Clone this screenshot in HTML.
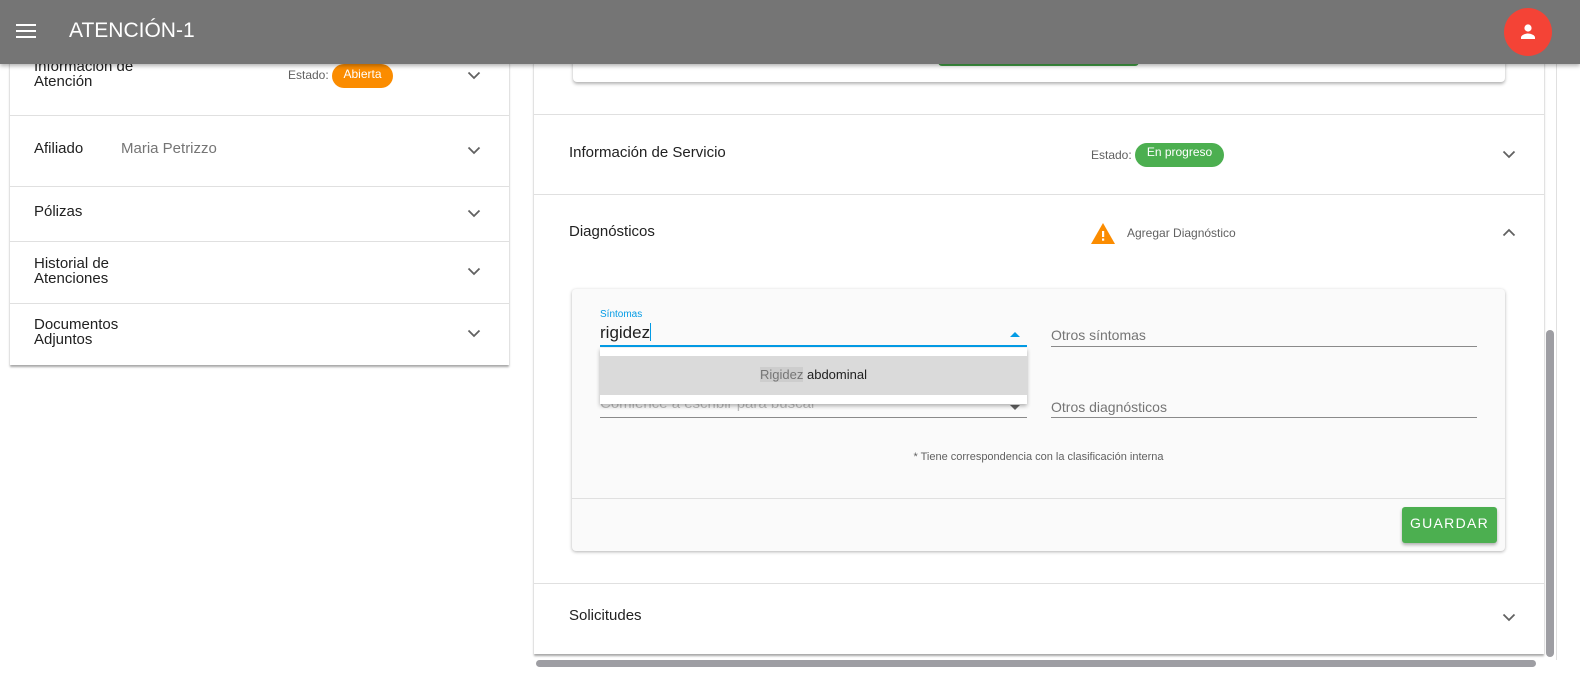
<!DOCTYPE html>
<html><head><meta charset="utf-8"><style>
*{box-sizing:border-box;margin:0;padding:0}
body{width:1580px;height:696px;overflow:hidden;background:#fff;font-family:"Liberation Sans",sans-serif;position:relative;color:#212121}
.a{position:absolute}
.hr{position:absolute;height:1px;background:#e0e0e0}
.t{position:absolute;font-size:15px;color:#212121;line-height:15px}
.chev{position:absolute;width:14px;height:9px}
</style></head><body>

<!-- left panel -->
<div class="a" style="left:10px;top:40px;width:499px;height:325px;background:#fff;box-shadow:0 2px 2px rgba(0,0,0,.35)"></div>
<div class="t" style="left:34px;top:59px">Información de<br>Atención</div>
<div class="a" style="left:288px;top:68px;font-size:12px;color:#616161">Estado:</div>
<div class="a" style="left:332px;top:64px;width:61px;height:24px;border-radius:12px;background:#fb8c00;color:#fff;font-size:12px;text-align:center;line-height:21px">Abierta</div>
<div class="hr" style="left:10px;top:115px;width:499px"></div>
<div class="t" style="left:34px;top:141px">Afiliado</div>
<div class="t" style="left:121px;top:141px;color:#757575">Maria Petrizzo</div>
<div class="hr" style="left:10px;top:186px;width:499px"></div>
<div class="t" style="left:34px;top:204px">Pólizas</div>
<div class="hr" style="left:10px;top:241px;width:499px"></div>
<div class="t" style="left:34px;top:256px">Historial de<br>Atenciones</div>
<div class="hr" style="left:10px;top:303px;width:499px"></div>
<div class="t" style="left:34px;top:317px">Documentos<br>Adjuntos</div>

<svg class="chev" style="left:467px;top:71px" viewBox="0 0 14 9"><path d="M1.5 1.5 7 7l5.5-5.5" fill="none" stroke="#616161" stroke-width="1.8"/></svg>
<svg class="chev" style="left:467px;top:146px" viewBox="0 0 14 9"><path d="M1.5 1.5 7 7l5.5-5.5" fill="none" stroke="#616161" stroke-width="1.8"/></svg>
<svg class="chev" style="left:467px;top:209px" viewBox="0 0 14 9"><path d="M1.5 1.5 7 7l5.5-5.5" fill="none" stroke="#616161" stroke-width="1.8"/></svg>
<svg class="chev" style="left:467px;top:267px" viewBox="0 0 14 9"><path d="M1.5 1.5 7 7l5.5-5.5" fill="none" stroke="#616161" stroke-width="1.8"/></svg>
<svg class="chev" style="left:467px;top:329px" viewBox="0 0 14 9"><path d="M1.5 1.5 7 7l5.5-5.5" fill="none" stroke="#616161" stroke-width="1.8"/></svg>

<!-- right panel -->
<div class="a" style="left:534px;top:40px;width:1010px;height:614px;background:#fff;box-shadow:0 2px 2px rgba(0,0,0,.35)"></div>
<div class="a" style="left:573px;top:40px;width:932px;height:42px;background:#fff;border-radius:0 0 4px 4px;box-shadow:0 2px 3px rgba(0,0,0,.3)"></div>
<div class="a" style="left:938px;top:60px;width:201px;height:6px;background:#43a047;border-radius:0 0 4px 4px"></div>
<div class="hr" style="left:534px;top:114px;width:1010px"></div>
<div class="t" style="left:569px;top:145px">Información de Servicio</div>
<div class="a" style="left:1091px;top:148px;font-size:12px;color:#616161">Estado:</div>
<div class="a" style="left:1135px;top:143px;width:89px;height:24px;border-radius:12px;background:#4caf50;color:#fff;font-size:12px;text-align:center;line-height:19px">En progreso</div>
<svg class="chev" style="left:1502px;top:150px" viewBox="0 0 14 9"><path d="M1.5 1.5 7 7l5.5-5.5" fill="none" stroke="#616161" stroke-width="1.8"/></svg>
<div class="hr" style="left:534px;top:194px;width:1010px"></div>
<div class="t" style="left:569px;top:224px">Diagnósticos</div>
<svg class="a" style="left:1091px;top:223px" width="24" height="21" viewBox="0 0 24 21"><path d="M12 0 24 21H0z" fill="#fb8c00"/><rect x="11" y="8" width="2.2" height="6" fill="#fff"/><rect x="11" y="15.5" width="2.2" height="2.2" fill="#fff"/></svg>
<div class="a" style="left:1127px;top:226px;font-size:12px;color:#616161">Agregar Diagnóstico</div>
<svg class="chev" style="left:1502px;top:228px" viewBox="0 0 14 9"><path d="M1.5 7.5 7 2l5.5 5.5" fill="none" stroke="#616161" stroke-width="1.8"/></svg>

<!-- form card -->
<div class="a" style="left:572px;top:289px;width:933px;height:262px;background:#fafafa;border-radius:4px;box-shadow:0 1px 3px rgba(0,0,0,.3)"></div>
<div class="hr" style="left:572px;top:498px;width:933px"></div>
<div class="a" style="left:600px;top:309px;font-size:10px;color:#039be5">Síntomas</div>
<div class="a" style="left:600px;top:323px;font-size:17px;color:#212121">rigidez<span style="display:inline-block;width:1px;height:18px;background:#039be5;vertical-align:-3px"></span></div>
<svg class="a" style="left:1010px;top:332px" width="10" height="6"><path d="M0 5 5 0l5 5z" fill="#039be5"/></svg>
<div class="a" style="left:600px;top:345px;width:427px;height:2px;background:#039be5"></div>
<div class="a" style="left:600px;top:396px;font-size:15px;color:#bdbdbd;height:16px;line-height:16px;white-space:nowrap">Comience a escribir para buscar</div>
<svg class="a" style="left:1010px;top:405px" width="10" height="6"><path d="M0 0 5 5l5-5z" fill="#616161"/></svg>
<div class="a" style="left:600px;top:417px;width:427px;height:1px;background:#8a8a8a"></div>
<div class="a" style="left:600px;top:348px;width:427px;height:56px;background:#fff;box-shadow:0 2px 4px rgba(0,0,0,.3)"></div>
<div class="a" style="left:600px;top:356px;width:427px;height:39px;background:#dadada;text-align:center;font-size:13px;line-height:37px;color:#212121"><span style="background:#cdcdcd;color:#757575">Rigidez</span> abdominal</div>

<div class="a" style="left:1051px;top:327px;font-size:14px;color:#757575">Otros síntomas</div>
<div class="a" style="left:1051px;top:346px;width:426px;height:1px;background:#8a8a8a"></div>
<div class="a" style="left:1051px;top:399px;font-size:14px;color:#757575">Otros diagnósticos</div>
<div class="a" style="left:1051px;top:417px;width:426px;height:1px;background:#8a8a8a"></div>
<div class="a" style="left:572px;top:451px;width:933px;text-align:center;font-size:11px;color:#616161">* Tiene correspondencia con la clasificación interna</div>
<div class="a" style="left:1402px;top:507px;width:95px;height:36px;background:#4caf50;border-radius:3px;box-shadow:0 2px 3px rgba(0,0,0,.3);color:#fff;font-size:14px;letter-spacing:1.3px;text-align:center;line-height:33px">GUARDAR</div>

<div class="hr" style="left:534px;top:583px;width:1010px"></div>
<div class="t" style="left:569px;top:608px">Solicitudes</div>
<svg class="chev" style="left:1502px;top:613px" viewBox="0 0 14 9"><path d="M1.5 1.5 7 7l5.5-5.5" fill="none" stroke="#616161" stroke-width="1.8"/></svg>

<!-- scrollbars -->
<div class="a" style="left:1546px;top:330px;width:8px;height:327px;background:#9e9ea3;border-radius:4px"></div>
<div class="a" style="left:536px;top:660px;width:1000px;height:7px;background:#9e9ea3;border-radius:4px"></div>
<div class="a" style="left:1556px;top:0;width:1px;height:660px;background:#e0e0e0"></div>

<!-- header -->
<div class="a" style="left:0;top:0;width:1580px;height:64px;background:#757575;box-shadow:0 2px 4px rgba(0,0,0,.3)"></div>
<svg class="a" style="left:16px;top:24px" width="20" height="14"><rect y="0" width="20" height="2" fill="#fff"/><rect y="6" width="20" height="2" fill="#fff"/><rect y="12" width="20" height="2" fill="#fff"/></svg>
<div class="a" style="left:69px;top:19px;font-size:21px;color:#fff">ATENCIÓN-1</div>
<div class="a" style="left:1504px;top:8px;width:48px;height:48px;border-radius:50%;background:#f44336"></div>
<svg class="a" style="left:1518px;top:22px" width="20" height="20" viewBox="0 0 20 20"><circle cx="10" cy="6" r="3.6" fill="#fff"/><path d="M3 17v-1.5c0-2.5 4.5-4 7-4s7 1.5 7 4V17z" fill="#fff"/></svg>
</body></html>
